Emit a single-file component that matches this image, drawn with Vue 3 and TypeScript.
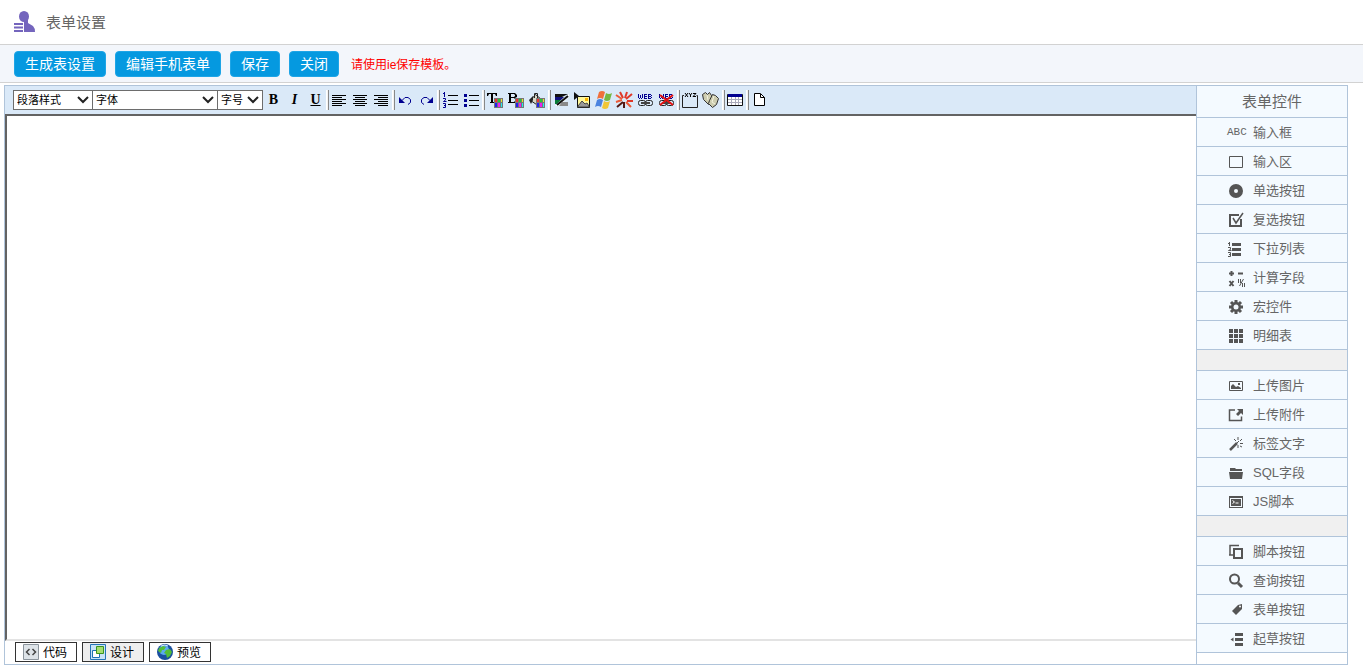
<script setup lang="ts">
import { ref } from 'vue'

interface Tool {
  title: string
  art?: string
  glyph?: string
  cls?: string
}
interface Control {
  label: string
  art: string
}

const paragraph = ref('段落样式')
const fontName = ref('字体')
const fontSize = ref('字号')
const mode = ref('设计')
const content = ref('')

const actions: string[] = ['生成表设置', '编辑手机表单', '保存', '关闭']

const palette =
  '<path d="M9 8h9v10H9z" fill="#777"/><path d="M10 9h2v3h-2z" fill="#e33"/><path d="M13 9h2v3h-2z" fill="#2c3"/><path d="M16 9h1v3h-1z" fill="#ee2"/><path d="M10 13h2v4h-2z" fill="#22e"/><path d="M13 13h2v4h-2z" fill="#e2e"/><path d="M16 13h1v4h-1z" fill="#2ee"/>'
const chain =
  '<g fill="none" stroke="#222"><rect x="3.500" y="10.500" width="7" height="5" rx="2"/><rect x="10.500" y="10.500" width="7" height="5" rx="2"/><path d="M6 12.500h9M6 13.500h9" stroke="#444"/></g>'
const webLetters =
  '<path d="M3.500 4v4M5.500 5v3M7.500 4v4M4 8.500h1M6 8.500h1M9.500 4v5M9 4.500h3M9 6.500h3M9 8.500h3M13.500 4v5M13 4.500h3M13 6.500h3M13 8.500h3M16.500 5v1M16.500 7v1" fill="none" stroke="#000090"/>'

const toolGroups: Tool[][] = [
  [
    { title: '粗体', glyph: 'B', cls: 'bold' },
    { title: '斜体', glyph: 'I', cls: 'italic' },
    { title: '下划线', glyph: 'U', cls: 'under' },
  ],
  [
    { title: '左对齐', art: '<path d="M3 5.500h14M3 7.500h10M3 9.500h14M3 11.500h10M3 13.500h14M3 15.500h10" stroke="#000"/>' },
    { title: '居中', art: '<path d="M3 5.500h14M5 7.500h10M3 9.500h14M5 11.500h10M3 13.500h14M5 15.500h10" stroke="#000"/>' },
    { title: '右对齐', art: '<path d="M3 5.500h14M7 7.500h10M3 9.500h14M7 11.500h10M3 13.500h14M7 15.500h10" stroke="#000"/>' },
  ],
  [
    { title: '撤销', art: '<path d="M4 7v6h6z" fill="#000090"/><path d="M7 10.500l3-3h3l2.500 2v3l-2.500 2" fill="none" stroke="#000090"/>' },
    { title: '重做', art: '<path d="M17 7v6h-6z" fill="#000090"/><path d="M14 10.500l-3-3h-3l-2.500 2v3l2.500 2" fill="none" stroke="#000090"/>' },
  ],
  [
    { title: '编号列表', art: '<path d="M8 5.500h10M8 10.500h10M8 14.500h10" stroke="#000"/><path d="M4.500 2v5M3 3.500h1M3 8.500h2.500v1.500l-2 1.500h3M3 13.500h2.500v4h-2.500M4 15.500h1" fill="none" stroke="#000090"/>' },
    { title: '项目列表', art: '<path d="M8 5.500h10M8 10.500h10M8 15.500h10" stroke="#000"/><path d="M3 4h3v3h-3zM3 9h3v3h-3zM3 14h3v3h-3z" fill="#000090"/>' },
  ],
  [
    { title: '文字颜色', art: '<path d="M2 3h10v3h-1l-1-2h-2v8h1v1h-4v-1h1v-8h-2l-1 2h-1z" fill="#000"/>' + palette },
    { title: '背景颜色', art: '<path fill-rule="evenodd" d="M2 3h7l2 2v2l-2 1 2 1v3l-2 1h-7v-1h1v-8h-1zM5 4v3h3l1-1v-1l-1-1zM5 8v4h3l1-1v-2l-1-1z" fill="#000"/>' + palette },
    { title: '填充', art: '<path d="M3.500 10.500l5-6 6 5-5 5z" fill="#d8d8c8" stroke="#222"/><path d="M7.500 8V3.500h3v5" fill="none" stroke="#222"/><path d="M2 10l4-4v4l-2 4z" fill="#222"/>' + palette },
  ],
  [
    { title: '分隔线', art: '<path d="M4 4h13l-8 4h-5z" fill="#111"/><path d="M4 7h9l-3 3h-6z" fill="#10107c"/><path d="M4 10h6l-4 4h-2z" fill="#087b38"/><path d="M4 16L18 4v3L8 16z" fill="#fff"/><path d="M11 12h6v4h-9z" fill="#8a8a8a"/><path d="M6 15L17 6" stroke="#111" stroke-width="2"/>' },
    { title: '插入图片', art: '<path d="M2 2v8l5-4z" fill="#111"/><path d="M5.500 6.500h12v11h-12z" fill="#fff899" stroke="#111"/><path d="M13 8h3v3h-3z" fill="#ffb700"/><path d="M6 16l4-5 3 3 2-1 2 3v1H6z" fill="#999" stroke="#444"/>' },
    { title: '插入媒体', art: '<path d="M6 2q3-2 6 0l-2 7q-3-2-6 0z" fill="#f0703c"/><path d="M13 3q3 2 6 0l-2 7q-3 2-6 0z" fill="#76b843"/><path d="M4 10q3-2 6 0l-2 7q-3-2-6 0z" fill="#4b83df"/><path d="M11 11q3 2 6 0l-2 7q-3 2-6 0z" fill="#f1c636"/>' },
    { title: '插入动画', art: '<path d="M9 8L6 2M11 8l2-6M12 9l6-5M13 11h6" stroke="#df3829" stroke-width="2"/><path d="M8 9L2 5M12 12l5 5M8 10l-6 2" stroke="#ec5a38" stroke-width="2"/><path d="M9 12l-6 5M10 12v6" stroke="#541914" stroke-width="2"/>' },
    { title: '插入链接', art: webLetters + chain },
    { title: '取消链接', art: webLetters + chain + '<path d="M4 5l13 10M17 5L4 15" stroke="#e51212" stroke-width="2"/>' },
  ],
  [
    { title: '分组框', art: '<path d="M4 5.500h-1.500v12h15v-12h-1" fill="none" stroke="#222"/><path d="M5 3l3 4M8 3l-3 4M9 3l1.500 2 1.500-2M10.500 5v2M13 3.500h3l-3 3h3" fill="none" stroke="#000"/>' },
    { title: '查找', art: '<g fill="#cdcdb0" stroke="#333"><path d="M1.500 4.500l3-2 2 2 2-2 2 3v7l-3 2-5-5z"/><path d="M8.500 10.500l3-6 3 1 3 3-2 6-4 3-4-4z"/><path d="M6 5l1 5M13 6l-2 6 3 2" fill="none" stroke="#f4f4df"/></g>' },
  ],
  [
    { title: '插入表格', art: '<path d="M2.500 4.500h15v11h-15z" fill="#fff" stroke="#111"/><path d="M3 4h14v3h-14z" fill="#000090"/><path d="M6.500 7v8M10.500 7v8M13.500 7v8M3 9.500h14M3 12.500h14" stroke="#aab"/>' },
  ],
  [
    { title: '新建', art: '<path d="M5.500 3.500h6l4 4v8h-10z" fill="#fff" stroke="#000"/><path d="M11.500 4v3.500h4" fill="none" stroke="#000"/>' },
  ],
]

// Artwork is drawn on an 18 by 18 grid.
const controlGroups: Control[][] = [
  [
    { label: '输入框', art: '' },
    { label: '输入区', art: '<path d="M2.500 3.500h13v11h-13z" fill="none"/>' },
    { label: '单选按钮', art: '<circle cx="9" cy="9" r="4.500" fill="none" stroke-width="5"/>' },
    { label: '复选按钮', art: '<path d="M14 8v7H3V4h9" fill="none" stroke-width="2"/><path d="M6 7l3 5 7-10" fill="none" stroke-width="1.500"/>' },
    { label: '下拉列表', art: '<path d="M5 4.500h9M5 9.500h9M5 14.500h9" stroke-width="3"/><path d="M2.500 2v4M1 3.500h1M1 7.500h2.500v2l-2 1h3M1 12.500h2.500v4h-2.500M2 14.500h1" fill="none"/>' },
    { label: '计算字段', art: '<path d="M2 4.500h5M4.500 2v5M11 4.500h5" stroke-width="2"/><path d="M2.500 12l4 5M6.500 12l-4 5" stroke-width="2"/><path d="M11.500 10v4M13.500 10v4M16.500 10l-4 7M15.500 14v4M17.500 14v4"/>' },
    { label: '宏控件', art: '<path d="M9 2v14M2 9h14M4 4l10 10M14 4L4 14" stroke-width="3"/><circle cx="9" cy="9" r="5" stroke="none"/><circle cx="9" cy="9" r="2.500" fill="#f4faff" stroke="none"/>' },
    { label: '明细表', art: '<path d="M2 4h4M7 4h4M12 4h4M2 9h4M7 9h4M12 9h4M2 14h4M7 14h4M12 14h4" stroke-width="4"/>' },
  ],
  [
    { label: '上传图片', art: '<path d="M2.500 4.500h13v9h-13z" fill="none"/><path d="M4 12V9l2-2 3 3 2-1 3 2v1zM11 6h2v2h-2z" stroke="none"/>' },
    { label: '上传附件', art: '<path d="M8 4H2.500v10.500h12v-4" fill="none" stroke-width="1.500"/><path d="M10 3h6v6l-2-2-3 3-2-2 3-3z" stroke="none"/>' },
    { label: '标签文字', art: '<path d="M3 15l7-7" stroke-width="2.500"/><path d="M10 8l2-2M7 4l2 2M11 2v3M15 4l-2 2M13 8.500h3M11 10v3M13 11l2 1"/>' },
    { label: 'SQL字段', art: '<path d="M3 4h5l1 1h6v2H3zM2 8h14l-1 7H3z" stroke="none"/>' },
    { label: 'JS脚本', art: '<path fill-rule="evenodd" d="M2 3h14v12H2zM3 5v9h12V5z" stroke="none"/><path d="M4 6h10v7H4z" stroke="none"/><path d="M5.500 7.500l2 1.500-2 1.500M8.500 10h3" fill="none" stroke="#fff"/>' },
  ],
  [
    { label: '脚本按钮', art: '<path d="M3 12V2.500H12M2 12h4" fill="none" stroke-width="1.500"/><path d="M7 6h8v9h-8z" fill="none" stroke-width="2"/>' },
    { label: '查询按钮', art: '<circle cx="7.500" cy="7" r="4.500" fill="none" stroke-width="2"/><path d="M11 11l4 4" stroke-width="3"/>' },
    { label: '表单按钮', art: '<path d="M5 10l6-6 4-1v5l-6 6z" stroke="none"/><circle cx="13" cy="5.500" r="1" fill="#fff" stroke="none"/>' },
    { label: '起草按钮', art: '<path d="M8 4.500h8M8 9.500h8M8 14.500h8" stroke-width="3"/><path d="M3.500 9.500l3-2v4z" stroke="none"/>' },
  ],
]

const views: Control[] = [
  { label: '代码', art: '<path d="M.5.5h15v15H.5z" fill="#dde3e8" stroke="#8b949c"/><path d="M6.500 5L3.500 8l3 3M9.500 5l3 3-3 3" fill="none" stroke="#444" stroke-width="1.500"/>' },
  { label: '设计', art: '<path d="M.5.5h15v15H.5z" fill="#c8e2f7" stroke="#2475b7"/><path d="M2.500 6.500h7v7h-7z" fill="#fff" stroke="#1c72b5"/><path d="M6.500 2.500h7v7h-7z" fill="#a5dd70" stroke="#3a941d"/>' },
  { label: '预览', art: '<circle cx="8" cy="8" r="8" fill="#1a4f9f"/><circle cx="7" cy="6" r="5" fill="#5aaaf0"/><path d="M2 4l4-2 3 1-2 3H5l-1 3-3-2zM9 6l4-1 2 3-2 4-3 2-1-4-2-1z" fill="#52bd38"/><path d="M4 2q4-2 7 0" stroke="#d6ecff" fill="none"/>' },
]
</script>

<template>
  <div class="page">
    <header class="title-bar">
      <svg class="logo" viewBox="0 0 22 22" aria-hidden="true">
        <ellipse cx="10" cy="5.500" rx="5" ry="5.500" fill="#7465bd" />
        <path d="M10 9h4v3l5 3q2 2 2 6H10z" fill="#7465bd" />
        <path d="M0 13h9M0 16.500h9M0 20h9" stroke="#7465bd" stroke-width="2" />
      </svg>
      <h1>表单设置</h1>
    </header>

    <div class="action-bar">
      <button v-for="a in actions" :key="a" type="button" class="action">{{ a }}</button>
      <span class="hint">请使用ie保存模板。</span>
    </div>

    <main class="frame">
      <section class="editor">
        <div class="toolbar">
          <div class="picker paragraph">
            <select v-model="paragraph" aria-label="段落样式"><option>段落样式</option></select>
            <svg viewBox="0 0 12 8" aria-hidden="true"><path d="M1 1l5 5 5-5" /></svg>
          </div>
          <div class="picker family">
            <select v-model="fontName" aria-label="字体"><option>字体</option></select>
            <svg viewBox="0 0 12 8" aria-hidden="true"><path d="M1 1l5 5 5-5" /></svg>
          </div>
          <div class="picker size">
            <select v-model="fontSize" aria-label="字号"><option>字号</option></select>
            <svg viewBox="0 0 12 8" aria-hidden="true"><path d="M1 1l5 5 5-5" /></svg>
          </div>
          <div v-for="(group, g) in toolGroups" :key="g" class="tool-group">
            <button v-for="t in group" :key="t.title" type="button" class="tool" :class="t.cls" :title="t.title" :aria-label="t.title">
              <template v-if="t.glyph">{{ t.glyph }}</template>
              <svg v-else viewBox="0 0 21 20" aria-hidden="true" v-html="t.art"></svg>
            </button>
          </div>
        </div>
        <textarea v-model="content" class="canvas" aria-label="表单内容"></textarea>
        <div class="views">
          <button v-for="v in views" :key="v.label" type="button" class="view" :class="{ active: mode === v.label }" @click="mode = v.label">
            <svg viewBox="0 0 16 16" aria-hidden="true" v-html="v.art"></svg>
            <span>{{ v.label }}</span>
          </button>
        </div>
      </section>

      <aside class="sidebar">
        <h2>表单控件</h2>
        <div v-for="(group, g) in controlGroups" :key="g" class="control-group">
          <button v-for="c in group" :key="c.label" type="button" class="control">
            <svg v-if="c.art" viewBox="0 -2 18 18" aria-hidden="true" v-html="c.art"></svg>
            <span v-else class="abc">ABC</span>
            <span>{{ c.label }}</span>
          </button>
        </div>
      </aside>
    </main>
  </div>
</template>

<style>
body {
  background: #fff;
}
</style>

<style scoped>
.page {
  box-sizing: border-box;
  min-height: 100vh;
  display: flex;
  flex-direction: column;
  font-family: "Liberation Sans", "Noto Sans CJK SC", sans-serif;
  font-size: 13px;
  color: #555;
}
button,
select,
textarea {
  box-sizing: border-box;
  margin: 0;
  font-family: inherit;
}
.title-bar {
  height: 44px;
  display: flex;
  align-items: center;
  gap: 10px;
  padding-left: 14px;
  border-bottom: 1px solid #d2d2d2;
}
.logo {
  width: 22px;
  height: 22px;
}
h1 {
  margin: 0;
  padding-bottom: 2px;
  font-size: 15px;
  font-weight: 400;
  color: #666;
}
.action-bar {
  height: 37px;
  display: flex;
  align-items: center;
  gap: 9px;
  padding-left: 14px;
  background: #f3f6fb;
  border-bottom: 1px solid #d2d2d2;
}
.action {
  height: 26px;
  padding: 0 10px;
  border: 1px solid #1ea5e6;
  border-radius: 4px;
  background: #0599e0;
  color: #fff;
  font-size: 14px;
  line-height: 20px;
}
.hint {
  margin-left: 3px;
  color: #f00;
  font-size: 12px;
}
.frame {
  flex: 1;
  display: flex;
  margin: 2px 15px 5px 4px;
  border: 1px solid #b0c4da;
}
.editor {
  flex: 1;
  min-width: 0;
  display: flex;
  flex-direction: column;
}
.toolbar {
  height: 28px;
  display: flex;
  align-items: center;
  padding-left: 8px;
  background: #dae9f8;
}
.picker {
  position: relative;
  height: 20px;
}
.picker + .picker {
  margin-left: -1px;
}
.paragraph {
  width: 80px;
}
.family {
  width: 126px;
}
.size {
  width: 46px;
}
.picker select {
  width: 100%;
  height: 20px;
  padding: 0 3px;
  border: 1px solid #6d6d6d;
  border-radius: 0;
  background: #fff;
  appearance: none;
  color: #000;
  font-size: 11px;
}
.picker svg {
  position: absolute;
  top: 6px;
  right: 4px;
  width: 12px;
  height: 8px;
  pointer-events: none;
}
.picker path {
  fill: none;
  stroke: #222;
  stroke-width: 2;
}
.tool-group {
  display: flex;
}
.tool-group + .tool-group::before {
  content: "";
  box-sizing: border-box;
  width: 3px;
  height: 20px;
  border-left: 1px solid #fff;
  border-right: 1px solid #888;
  background: #f2f2f2;
}
.tool {
  width: 21px;
  height: 20px;
  padding: 0;
  border: 0;
  background: none;
  color: #000;
  font-family: "Liberation Serif", serif;
  font-size: 14px;
  font-weight: 700;
  line-height: 20px;
}
.tool svg {
  display: block;
  width: 21px;
  height: 20px;
}
.italic {
  font-style: italic;
}
.under {
  text-decoration: underline;
}
.canvas {
  flex: 1;
  width: 100%;
  min-height: 200px;
  padding: 8px;
  border: 0 solid #636363;
  border-width: 2px 0 2px 2px;
  border-bottom-color: #e3e3e3;
  background: #fff;
  font-size: 14px;
  resize: none;
  outline: none;
}
.views {
  height: 23px;
  display: flex;
  align-items: flex-start;
  gap: 5px;
  padding: 0 10px;
}
.view {
  width: 62px;
  height: 20px;
  margin-top: 1px;
  padding: 0 2px 0 0;
  display: flex;
  align-items: center;
  justify-content: center;
  gap: 4px;
  border: 1px solid #333;
  background: #fff;
  color: #000;
  font-size: 12px;
}
.view span {
  padding-bottom: 2px;
}
.view.active {
  background: #eee;
}
.view svg {
  width: 16px;
  height: 16px;
}
.sidebar {
  width: 150px;
  border-left: 1px solid #b0c4da;
}
h2 {
  height: 31px;
  margin: 0;
  border-bottom: 1px solid #b0c4da;
  background: #f4faff;
  font-size: 15px;
  font-weight: 400;
  line-height: 31px;
  text-align: center;
  color: #666;
}
.control-group + .control-group {
  border-top: 20px solid #f0f0f0;
}
.control-group + .control-group::before {
  content: "";
  display: block;
  height: 1px;
  background: #b0c4da;
}
.control {
  width: 100%;
  height: 29px;
  padding: 0 0 2px 30px;
  display: flex;
  align-items: center;
  gap: 8px;
  border: 0;
  border-bottom: 1px solid #b0c4da;
  background: #f4faff;
  color: #666;
  font-size: 13px;
}
.control svg {
  width: 18px;
  height: 18px;
  overflow: visible;
  fill: #555;
  stroke: #555;
}
.abc {
  width: 18px;
  padding-top: 2px;
  font-family: "Liberation Mono", monospace;
  font-size: 11px;
}
</style>
